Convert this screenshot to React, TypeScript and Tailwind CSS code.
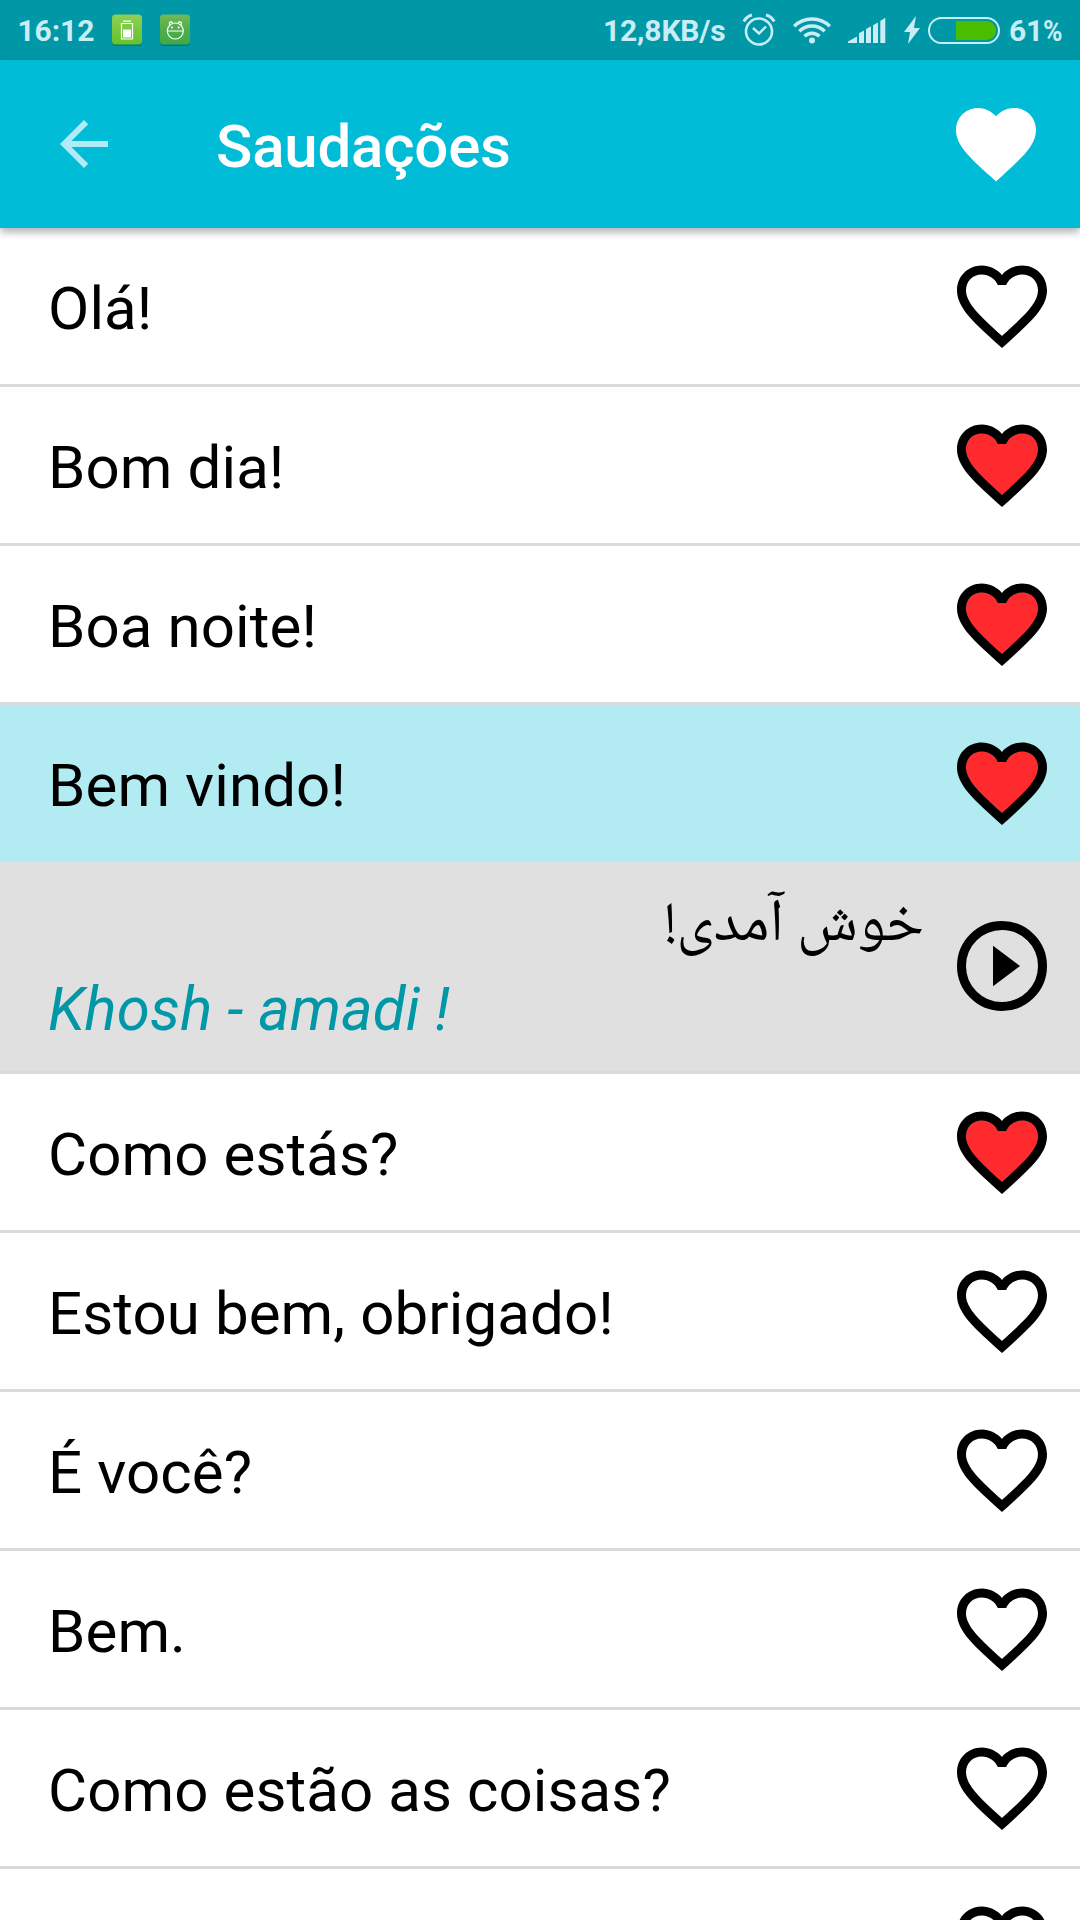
const HEART =
  "M12 21.35l-1.45-1.32C5.4 15.36 2 12.28 2 8.5 2 5.42 4.42 3 7.5 3c1.74 0 3.41.81 4.5 2.09C13.09 3.81 14.76 3 16.5 3 19.58 3 22 5.42 22 8.5c0 3.78-3.4 6.86-8.55 11.54L12 21.35z";
const HEART_OUTLINE =
  "M16.5 3c-1.74 0-3.41.81-4.5 2.09C10.91 3.81 9.24 3 7.5 3 4.42 3 2 5.42 2 8.5c0 3.78 3.4 6.86 8.55 11.54L12 21.35l1.45-1.32C18.6 15.36 22 12.28 22 8.5 22 5.42 19.58 3 16.5 3zm-4.4 15.55l-.1.1-.1-.1C7.14 14.24 4 11.39 4 8.5 4 6.5 5.5 5 7.5 5c1.54 0 3.04.99 3.57 2.36h1.87C13.46 5.99 14.96 5 16.5 5c2 0 3.5 1.5 3.5 3.5 0 2.89-3.14 5.74-7.9 10.05z";

function Heart({ liked }: { liked: boolean }) {
  return (
    <svg viewBox="0 0 24 24" className="size-[108px] shrink-0">
      {liked && (
        <path
          fill="#ff2a2d"
          d="M12.1 18.55l-.1.1-.1-.1C7.14 14.24 4 11.39 4 8.5 4 6.5 5.5 5 7.5 5c1.54 0 3.04.99 3.57 2.36h1.87C13.46 5.99 14.96 5 16.5 5c2 0 3.5 1.5 3.5 3.5 0 2.89-3.14 5.74-7.9 10.05z"
          stroke="#ff2a2d"
          strokeWidth="0.2"
        />
      )}
      <path d={HEART_OUTLINE} fill="#000" />
    </svg>
  );
}

function Phrase({ text, liked = false, selected = false }: { text: string; liked?: boolean; selected?: boolean }) {
  return (
    <li
      className={
        selected
          ? "flex h-[156px] shrink-0 items-center justify-between bg-[#b2ebf2] pr-6 pl-12"
          : "flex h-[159px] shrink-0 items-center justify-between border-b-[3px] border-[#dadada] bg-white pr-6 pl-12"
      }
    >
      <span className="pt-1.5 text-[60px] leading-[72px] tracking-[0.1px] whitespace-nowrap">{text}</span>
      <Heart liked={liked} />
    </li>
  );
}

function Translation() {
  return (
    <li className="flex h-[213px] shrink-0 items-center border-b-[3px] border-[#dadada] bg-[#e0e0e0] pr-6 pl-12">
      <div className="flex h-full flex-1 flex-col pt-[30px] pr-6">
        <p dir="rtl" lang="fa" className="h-[83px] font-['Noto_Naskh_Arabic','DejaVu_Sans',sans-serif] text-[60px] leading-[72px] whitespace-nowrap">
          خوش آمدی!
        </p>
        <p className="text-[60px] leading-[72px] tracking-[0.1px] whitespace-nowrap text-[#0097a7] italic">Khosh - amadi !</p>
      </div>
      <svg viewBox="0 0 24 24" className="size-[108px] shrink-0">
        <circle cx="12" cy="12" r="9" fill="none" stroke="#000" strokeWidth="2" />
        <path d="M10 16.5l6-4.5-6-4.5z" />
      </svg>
    </li>
  );
}

function StatusBar() {
  return (
    <header className="flex h-[60px] shrink-0 items-center bg-[#0097a7] pr-[18px] pl-[17.5px] text-[30px] leading-[60px] font-bold text-[#c9edf5]">
      <span className="w-[93.5px] pt-0.5 tracking-[-0.1px]">16:12</span>
      <svg viewBox="0 0 32 34" className="h-[34px] w-8">
        <defs>
          <linearGradient id="app1" x1="0" y1="0" x2="0" y2="1">
            <stop offset="0" stopColor="#8fcf56" />
            <stop offset="1" stopColor="#63c32b" />
          </linearGradient>
        </defs>
        <rect x="1" y="3" width="30" height="30" rx="4" fill="#077582" />
        <rect x="1" y="1.5" width="30" height="30" rx="3.5" fill="url(#app1)" />
        <path d="M12 8.2h8M10.5 10.5h11v15.500h-11z" fill="none" stroke="#fff" strokeWidth="1.2" />
        <path d="M12 16.5h8v8h-8z" fill="#fff" />
      </svg>
      <svg viewBox="0 0 32 34" className="ml-4 h-[34px] w-8">
        <defs>
          <linearGradient id="app2" x1="0" y1="0" x2="0" y2="1">
            <stop offset="0" stopColor="#72b957" />
            <stop offset="0.5" stopColor="#4fae4a" />
            <stop offset="1" stopColor="#3dab45" />
          </linearGradient>
        </defs>
        <rect x="1" y="3" width="30" height="30" rx="4" fill="#077582" />
        <rect x="1" y="1.5" width="30" height="30" rx="3.5" fill="url(#app2)" />
        <g fill="none" stroke="#fff" strokeWidth="1.2">
          <circle cx="16.3" cy="18" r="8" />
          <path d="M8.5 18h15.800M10.500 13v-3.500l2-.8 1.400 2M22.200 13v-3.500l-2-.8-1.400 2" />
        </g>
        <circle cx="13" cy="14.6" r="1" fill="#fff" />
        <circle cx="19.6" cy="14.6" r="1" fill="#fff" />
      </svg>
      <div className="flex-1" />
      <span className="w-[139px] pt-0.5 tracking-[-0.15px] whitespace-nowrap">12,8KB/s</span>
      <svg viewBox="0 0 34 34" className="h-[34px] w-[34px]" fill="none" stroke="#c9edf5">
        <circle cx="17" cy="18.5" r="13" strokeWidth="2.6" />
        <path d="M11 15l6 5.500 7-7" strokeWidth="2.4" />
        <path d="M1.8 8.5Q4.5 3.5 10 2M32.2 8.5Q29.5 3.5 24 2" strokeWidth="3" />
      </svg>
      <svg viewBox="0 0 40 30" className="ml-4 h-[30px] w-10" fill="none" stroke="#c9edf5" strokeWidth="3.5">
        <path d="M2.2 11.2a25.4 25.4 0 0 1 35.6 0M7.3 16.2a18.2 18.2 0 0 1 25.4 0M12.5 21.2a10.8 10.8 0 0 1 15 0" />
        <circle cx="20" cy="25.6" r="3" fill="#c9edf5" stroke="none" />
      </svg>
      <svg viewBox="0 0 38 28" className="ml-4 h-7 w-[38px]" fill="#c9edf5">
        <path d="M0 27v-1.500L9 20.500V27zM11 27V17.200l5-2.800V27zM18 27v-14l5-2.800V27zM25 27V9.200l5-2.800V27zM32.300 27V5l5-3.300V27z" />
      </svg>
      <svg viewBox="0 0 18 30" className="ml-[17px] h-[30px] w-[18px]" fill="#c9edf5">
        <path d="M13 1L1 17h6L5 29 17 13h-6z" />
      </svg>
      <div className="ml-[7px] flex h-[27px] w-[72px] justify-end rounded-full border-2 border-[#c9edf5] p-0.5">
        <div className="w-10 rounded-r-full bg-[#49bd00]" />
      </div>
      <span className="ml-[9px] w-[53px] pt-0.5 tracking-[-0.3px] whitespace-nowrap">
        61<span className="inline-block origin-left scale-x-[0.88]">%</span>
      </span>
    </header>
  );
}

export default function App() {
  return (
    <main className="flex h-[1920px] w-[1080px] flex-col overflow-hidden bg-white font-[Roboto,sans-serif] text-black">
      <StatusBar />
      <nav className="relative z-10 flex h-[168px] shrink-0 items-center bg-[#00bcd7] pr-9 pl-12 shadow-[0_4px_8px_rgba(0,0,0,0.32)]">
        <svg viewBox="0 0 24 24" className="size-[72px]" fill="#b2ebf5">
          <path d="M20 11H7.800l5.600-5.600L12 4l-8 8 8 8 1.400-1.400L7.800 13H20z" />
        </svg>
        <h1 className="ml-24 flex-1 pt-1.5 text-[60px] leading-[72px] font-medium tracking-[-0.2px] text-white">Saudações</h1>
        <svg viewBox="0 0 24 24" className="size-24" fill="#fff">
          <path d={HEART} />
        </svg>
      </nav>
      <ul className="flex flex-col">
        <Phrase text="Olá!" />
        <Phrase text="Bom dia!" liked />
        <Phrase text="Boa noite!" liked />
        <Phrase text="Bem vindo!" liked selected />
        <Translation />
        <Phrase text="Como estás?" liked />
        <Phrase text="Estou bem, obrigado!" />
        <Phrase text="É você?" />
        <Phrase text="Bem." />
        <Phrase text="Como estão as coisas?" />
        <Phrase text="" />
      </ul>
    </main>
  );
}
